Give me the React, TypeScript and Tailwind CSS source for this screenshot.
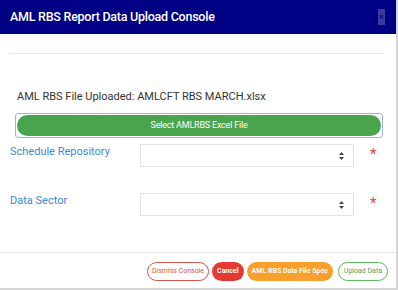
import React from "react";

const SelectBox: React.FC = () => (
  <div className="w-[214px] h-[23px] border border-[#e3e3e3] bg-white flex items-center justify-end pr-[9px]">
    <svg width="5" height="8" viewBox="0 0 5 8">
      <path d="M2.5 0 L5 3 H0 Z" fill="#444" />
      <path d="M2.5 8 L5 5 H0 Z" fill="#444" />
    </svg>
  </div>
);

const App: React.FC = () => {
  return (
    <div
      className="w-[398px] h-[290px] bg-white border-r-2 border-b-2 border-[#d6d6d6] relative overflow-hidden"
      style={{ fontFamily: "Roboto, 'Liberation Sans', sans-serif" }}
    >
      {/* Header */}
      <div className="h-[34px] bg-[#000085] flex items-center justify-between pl-[10px] pr-[11px]">
        <span className="text-white text-[12.5px] font-medium tracking-[-0.25px]">
          AML RBS Report Data Upload Console
        </span>
        <span className="w-[7px] h-[16px] bg-[#3a3aa0] text-[#0a0a80] text-[9px] leading-[16px] flex items-center justify-center font-bold">
          ×
        </span>
      </div>

      <div className="px-[10px]">
        <div className="mt-[19px] border-t border-[#e6e6e6] mr-[2px]"></div>

        <p className="mt-[36px] ml-[7px] text-[11px] text-[#333] leading-[14px]">
          AML RBS File Uploaded: AMLCFT RBS MARCH.xlsx
        </p>

        <div className="mt-[9px] ml-[5px] w-[368px] h-[25px] border border-[#9ab4f0] rounded-[3px] p-px">
          <button className="w-full h-full rounded-full bg-[#4aa34d] text-white text-[9px] flex items-center justify-center tracking-[-0.2px]">
            Select AMLRBS Excel File
          </button>
        </div>

        {/* Schedule Repository */}
        <div className="mt-[6px] flex items-start">
          <span className="w-[130px] text-[11px] text-[#3c8ad4] leading-[14px] pt-px">
            Schedule Repository
          </span>
          <SelectBox />
          <span className="ml-[16px] text-[#e8403c] text-[15px] leading-[15px] mt-[3px]">*</span>
        </div>

        {/* Data Sector */}
        <div className="mt-[26px] flex items-start">
          <span className="w-[130px] text-[11px] text-[#3c8ad4] leading-[14px] pt-px">
            Data Sector
          </span>
          <SelectBox />
          <span className="ml-[16px] text-[#e8403c] text-[15px] leading-[15px] mt-[3px]">*</span>
        </div>
      </div>

      <div className="mt-[36px] border-t border-[#e3e3e3]"></div>

      {/* Footer */}
      <div className="mt-[9px] flex justify-end items-center gap-[3px] pr-[8px] text-[7px]">
        <button className="h-[19px] px-[4px] rounded-full border border-[#d9534f] text-[#d9534f] bg-white">
          Dismiss Console
        </button>
        <button className="h-[19px] px-[5px] rounded-full bg-[#e53a33] text-white font-bold">
          Cancel
        </button>
        <button className="h-[19px] px-[5px] rounded-full bg-[#f7a02c] text-white font-bold">
          AML RBS Data File Spec
        </button>
        <button className="ml-[2px] h-[19px] px-[5px] rounded-full border border-[#5cb85c] text-[#5a9a5a] bg-white">
          Upload Data
        </button>
      </div>
    </div>
  );
};

export default App;
